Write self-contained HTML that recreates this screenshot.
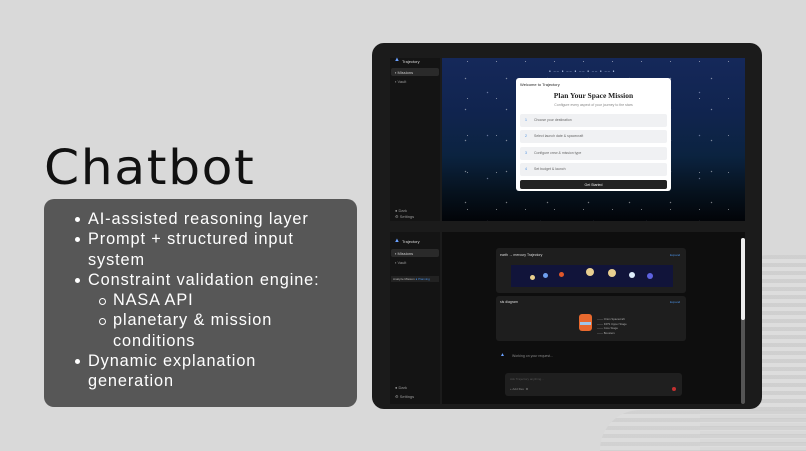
<!DOCTYPE html>
<html><head><style>
*{margin:0;padding:0;box-sizing:border-box}
body{width:806px;height:451px;overflow:hidden;background:#d9d9d9;font-family:"Liberation Sans",sans-serif;position:relative}
.stripes{position:absolute;left:700px;top:255px;width:106px;height:196px;background:repeating-linear-gradient(180deg,#cdcdcd 0 4px,#dedede 4px 8px);border-radius:70px 0 0 0;opacity:.8}
.stripes2{position:absolute;left:600px;top:410px;width:206px;height:41px;background:repeating-linear-gradient(180deg,#cecece 0 4px,#dddddd 4px 8px);border-radius:40px 0 0 0;opacity:.7}
h1{position:absolute;left:44px;top:140px;font-size:48px;color:#111;letter-spacing:1.5px;transform:scaleX(1.05);transform-origin:left;font-family:"DejaVu Sans",sans-serif;font-weight:400}
.box{position:absolute;left:44px;top:199px;width:313px;height:208px;background:#575757;border-radius:10px;color:#fff;font-size:16.3px;letter-spacing:.9px;line-height:20.3px;padding:10px 0 0 44px}
.box ul{list-style:none;width:248px}
.box li{position:relative}
.box li:before{content:"";position:absolute;left:-13px;top:8px;width:5px;height:5px;border-radius:50%;background:#fff}
.box li.s{padding-left:25px}
.box li.s:before{left:11px;width:5px;height:5px;background:none;border:1px solid #fff}
.dev{position:absolute;left:372px;top:43px;width:390px;height:366px;background:#1b1b1b;border-radius:12px}
.side{position:absolute;background:#171717}
.t{position:absolute;font-size:4px;color:#ccc;white-space:nowrap}
.sky{position:absolute;left:442px;top:58px;width:303px;height:163px;background:linear-gradient(180deg,#15285a 0%,#10244e 35%,#0b2340 60%,#06121e 82%,#020408 100%);overflow:hidden}
.stars{position:absolute;inset:0;background-image:radial-gradient(circle,#fff 0.5px,transparent 0.9px),radial-gradient(circle,#cfd8ff 0.5px,transparent 0.9px),radial-gradient(circle,#fff 0.4px,transparent 0.8px);background-size:41px 31px,53px 43px,29px 37px;background-position:3px 5px,19px 13px,11px 22px;opacity:.45}
.modal{position:absolute;left:516px;top:78px;width:155px;height:113px;background:#fff;border-radius:3px}
.row{position:absolute;left:4px;width:147px;height:13px;background:#f0f1f3;border-radius:2px;font-size:3.5px;color:#666;padding:4px 0 0 14px}
.row b{position:absolute;left:5px;top:4px;color:#4a8fe0;font-weight:400}
.main2{position:absolute;left:442px;top:232px;width:303px;height:172px;background:#0e0e0e}
.card{position:absolute;background:#1e1e1e;border-radius:3px}
.pl{position:absolute;border-radius:50%}
</style></head><body>
<div class="stripes"></div><div class="stripes2"></div>
<h1>Chatbot</h1>
<div class="box"><ul>
<li>AI-assisted reasoning layer</li>
<li>Prompt + structured input system</li>
<li>Constraint validation engine:</li>
<li class="s">NASA API</li>
<li class="s">planetary &amp; mission conditions</li>
<li>Dynamic explanation generation</li>
</ul></div>

<div class="dev"></div>
<div class="side" style="left:390px;top:58px;width:50px;height:163px;background:#141414"></div>
<div class="t" style="left:394px;top:57px;color:#6aa0ff;font-size:6px">▲</div>
<div class="t" style="left:402px;top:59px;color:#ddd">Trajectory</div>
<div style="position:absolute;left:391px;top:68px;width:48px;height:8px;background:#2a2a2a;border-radius:2px"></div>
<div class="t" style="left:395px;top:70px">▪ Missions</div>
<div class="t" style="left:395px;top:79px;color:#999">▪ Vault</div>
<div class="t" style="left:395px;top:208px;color:#999">● Dark</div>
<div class="t" style="left:395px;top:214px;color:#999">⚙ Settings</div>
<div class="sky"><div class="stars"></div></div>
<div class="t" style="left:549px;top:69px;color:#cfe0ff;font-size:3px;letter-spacing:1px">● ── ● ── ● ── ● ── ● ── ●</div>
<div class="modal">
<div class="t" style="left:4px;top:4px;color:#222;font-size:4px">Welcome to Trajectory</div>
<div style="position:absolute;left:0;width:155px;top:13px;text-align:center;font-family:'Liberation Serif',serif;font-weight:bold;font-size:7.5px;color:#222">Plan Your Space Mission</div>
<div style="position:absolute;left:0;width:155px;top:25px;text-align:center;font-size:3.5px;color:#888">Configure every aspect of your journey to the stars</div>
<div class="row" style="top:36px"><b>1</b>Choose your destination</div>
<div class="row" style="top:52px"><b>2</b>Select launch date &amp; spacecraft</div>
<div class="row" style="top:69px"><b>3</b>Configure crew &amp; mission type</div>
<div class="row" style="top:85px"><b>4</b>Set budget &amp; launch</div>
<div style="position:absolute;left:4px;top:102px;width:147px;height:9px;background:#222;border-radius:2px;color:#eee;font-size:3.5px;text-align:center;padding-top:2.5px">Get Started</div>
</div>
<div class="side" style="left:390px;top:232px;width:50px;height:172px;background:#141414"></div>
<div class="t" style="left:394px;top:238px;color:#6aa0ff;font-size:6px">▲</div>
<div class="t" style="left:402px;top:239px;color:#ddd">Trajectory</div>
<div style="position:absolute;left:391px;top:249px;width:48px;height:8px;background:#2a2a2a;border-radius:2px"></div>
<div class="t" style="left:395px;top:251px">▪ Missions</div>
<div class="t" style="left:395px;top:260px;color:#999">▪ Vault</div>
<div style="position:absolute;left:391px;top:276px;width:48px;height:6px;background:#222"></div>
<div class="t" style="left:393px;top:277px;font-size:3px;color:#bbb">Analyze Mission <span style="color:#4a8fe0">● Planning</span></div>
<div class="t" style="left:395px;top:385px;color:#999">● Dark</div>
<div class="t" style="left:395px;top:394px;color:#999">⚙ Settings</div>
<div class="main2"></div>
<div class="card" style="left:496px;top:248px;width:190px;height:45px"></div>
<div class="t" style="left:500px;top:253px;color:#ddd;font-size:3.5px">earth → mercury Trajectory</div>
<div class="t" style="left:670px;top:253px;color:#4a8fe0;font-size:3px">Expand</div>
<div style="position:absolute;left:511px;top:265px;width:162px;height:22px;background:#11143a"></div>
<div class="pl" style="left:530px;top:275px;width:5px;height:5px;background:#e9cf8e"></div>
<div class="pl" style="left:543px;top:273px;width:5px;height:5px;background:#6e9ff0"></div>
<div class="pl" style="left:559px;top:272px;width:5px;height:5px;background:#e0572a"></div>
<div class="pl" style="left:586px;top:268px;width:8px;height:8px;background:#e8cf90"></div>
<div class="pl" style="left:608px;top:269px;width:8px;height:8px;background:#e8cf90"></div>
<div class="pl" style="left:629px;top:272px;width:6px;height:6px;background:#dfeefc"></div>
<div class="pl" style="left:647px;top:273px;width:6px;height:6px;background:#5d62e0"></div>
<div class="card" style="left:496px;top:296px;width:190px;height:45px"></div>
<div class="t" style="left:500px;top:300px;color:#ddd;font-size:3.5px">sls diagram</div>
<div class="t" style="left:670px;top:300px;color:#4a8fe0;font-size:3px">Expand</div>
<div style="position:absolute;left:579px;top:314px;width:13px;height:17px;background:#e8692e;border-radius:3px"></div>
<div style="position:absolute;left:580px;top:322px;width:11px;height:3px;background:#9fc6e8"></div>
<div class="t" style="left:597px;top:317px;font-size:2.8px;color:#aaa;line-height:4.7px">─── Orion Spacecraft<br>─── ICPS Upper Stage<br>─── Core Stage<br>─── Boosters</div>
<div class="t" style="left:500px;top:352px;color:#6aa0ff;font-size:5px">▲</div>
<div class="t" style="left:512px;top:354px;color:#888;font-size:3.5px">Working on your request...</div>
<div style="position:absolute;left:505px;top:373px;width:177px;height:23px;background:#1f1f1f;border-radius:3px"></div>
<div class="t" style="left:510px;top:377px;color:#555;font-size:3px">Ask Trajectory anything...</div>
<div class="t" style="left:510px;top:387px;color:#888;font-size:3px">+ Add files &nbsp;⚙</div>
<div class="pl" style="left:672px;top:387px;width:4px;height:4px;background:#c23030"></div>
<div style="position:absolute;left:741px;top:238px;width:4px;height:166px;background:#555;border-radius:2px"></div>
<div style="position:absolute;left:741px;top:238px;width:4px;height:82px;background:#eee;border-radius:2px"></div>
</body></html>
